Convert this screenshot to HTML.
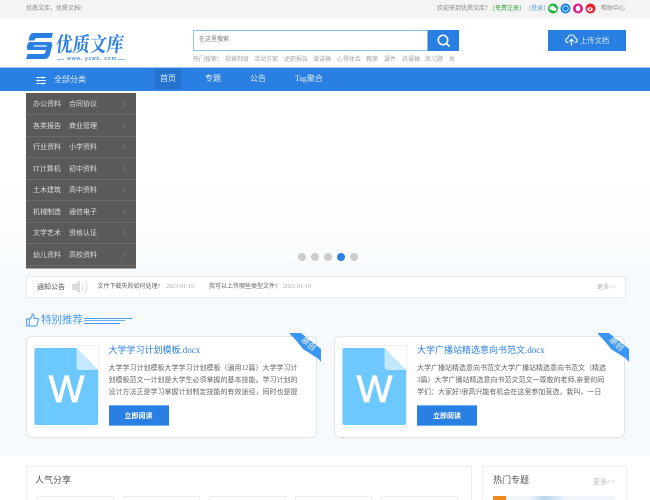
<!DOCTYPE html>
<html><head><meta charset="utf-8">
<style>
html,body{margin:0;padding:0;width:650px;height:500px;overflow:hidden;background:#fff}
body{position:relative;font-family:"Liberation Serif","Noto Sans CJK SC",sans-serif;color:#666}
.a{position:absolute;white-space:nowrap}
.x{font-size:6px;line-height:10px;color:#a5a5a5}
.m{position:absolute;left:26px;width:110px;height:21px;border-bottom:1px solid #6a6a6a;color:#ddd;font-size:7px;line-height:22px}
.m span{position:absolute;top:0}
.m i{position:absolute;top:0;left:96px;font-style:normal;font-size:9px;color:#888}
.card{position:absolute;top:336px;width:289px;height:100px;background:#fff;border:1px solid #e2e4e6;border-radius:6px}
.t{position:absolute;font-size:7px;line-height:12px;color:#666;white-space:nowrap}
.btn{position:absolute;width:60px;height:21px;background:#2a7fe2;color:#fff;font-size:7px;line-height:20px;text-align:center;font-weight:bold;box-sizing:border-box;border-top:1px solid #6fb0f0;border-bottom:1px solid #6fb0f0}
.h{position:absolute;top:496px;width:75px;height:10px;border:1px solid #eee;background:#fff}
.dot{position:absolute;top:253px;width:8px;height:8px;border-radius:50%;background:#ccc}
.n{font-size:8px;line-height:12px;color:#e4effb}
</style></head><body>
<div class="a" style="left:0;top:0;width:650px;height:18px;background:#f4f4f4"></div>
<div class="a x" style="left:26px;top:4px;color:#888">优质文库，优质文档!</div>
<div class="a x" style="left:437px;top:4px;color:#888">欢迎来到优质文库！</div>
<div class="a x" style="left:493px;top:4px;color:#3aa83a">[免费注册]</div>
<div class="a x" style="left:529px;top:4px;color:#5ba3d8">[登录]</div>
<svg class="a" style="left:548px;top:3px" width="50" height="12" viewBox="0 0 50 12">
<circle cx="5" cy="5.500" r="5" fill="#1fb53a"/><ellipse cx="4.200" cy="5" rx="2.800" ry="2.200" fill="#fff"/><ellipse cx="6.300" cy="6.300" rx="2.200" ry="1.700" fill="#fff"/>
<circle cx="17.500" cy="5.500" r="5" fill="#1280e6"/><circle cx="17.500" cy="5.500" r="2.800" fill="none" stroke="#bcdcf8" stroke-width="1"/>
<circle cx="30" cy="5.500" r="5" fill="#e0218a"/><ellipse cx="30" cy="5.500" rx="2.200" ry="2.900" fill="#fff"/>
<circle cx="42.500" cy="5.500" r="5" fill="#e8232e"/><ellipse cx="42" cy="6.300" rx="2.800" ry="2" fill="#fff"/><circle cx="42" cy="6.300" r="1" fill="#e8232e"/>
</svg>
<div class="a x" style="left:601px;top:4px;color:#888">帮助中心</div>

<svg class="a" style="left:26px;top:33px" width="27" height="26" viewBox="0 0 27 26">
<path d="M7 0H27L25.500 5H11Q9 5 8.300 7.500H2.500L3.500 3.500Q4.500 0 7 0Z" fill="#2a7fe2"/>
<path d="M4 9H24Q27 9 26 13L24 21Q23 26 18 26H0L1.500 21H17Q19 21 19.500 19L20 17H3Q0 17 1 13Q1.800 9 4 9Z" fill="#2a7fe2"/>
<path d="M8 12H21L20.500 14H7.500Z" fill="#a8cdf2"/>
</svg>
<div class="a" style="left:56px;top:32px;font-size:17px;line-height:22px;font-weight:bold;color:#2a7fe2;font-family:'Noto Serif CJK SC',serif;transform:skewX(-6deg) scaleY(1.2);transform-origin:center">优质文库</div>
<div class="a" style="left:57px;top:58.500px;width:7px;height:1px;background:#8fbcec"></div>
<div class="a" style="left:118px;top:58.500px;width:7px;height:1px;background:#8fbcec"></div>
<div class="a" style="left:67px;top:55.500px;font-family:'Liberation Sans',sans-serif;font-size:5px;line-height:7px;color:#4a90dc;letter-spacing:.75px;font-weight:bold">www. yzwk. com</div>

<div class="a" style="left:193px;top:30px;width:233px;height:19px;border:1px solid #8cc0f0;background:#fff"></div>
<div class="a x" style="left:199px;top:35px;color:#777">在这里搜索</div>
<div class="a" style="left:428px;top:30px;width:31px;height:21px;background:#2a7fe2"></div>
<svg class="a" style="left:436px;top:33px" width="16" height="16" viewBox="0 0 16 16"><circle cx="7" cy="7" r="4.700" fill="none" stroke="#fff" stroke-width="1.500"/><path d="M10.500 10.500L13.500 13.500" stroke="#fff" stroke-width="1.600"/></svg>
<div class="a x" style="left:193px;top:55px">热门搜索：</div>
<div class="a x" style="left:225px;top:55px">规章制度</div>
<div class="a x" style="left:254px;top:55px">活动方案</div>
<div class="a x" style="left:284px;top:55px">述职报告</div>
<div class="a x" style="left:313px;top:55px">演讲稿</div>
<div class="a x" style="left:337px;top:55px">心得体会</div>
<div class="a x" style="left:366px;top:55px">教案</div>
<div class="a x" style="left:384px;top:55px">课件</div>
<div class="a x" style="left:402px;top:55px">说课稿</div>
<div class="a x" style="left:425px;top:55px">练习题</div>
<div class="a x" style="left:449px;top:55px">发</div>

<div class="a" style="left:548px;top:30px;width:78px;height:21px;background:#2a7fe2"></div>
<svg class="a" style="left:565px;top:34px" width="13" height="12" viewBox="0 0 13 12"><path d="M3.500 8.500H3Q.8 8.500 .8 6.300Q.8 4.300 2.800 4Q3.300 1 6.500 1Q9.500 1 10.100 4Q12.200 4.300 12.200 6.300Q12.200 8.500 10 8.500H9.500" fill="none" stroke="#fff" stroke-width="1.100"/><path d="M6.500 11.500V5.500M4.300 7.500L6.500 5.300L8.700 7.500" fill="none" stroke="#fff" stroke-width="1.200"/></svg>
<div class="a" style="left:580px;top:35px;font-size:7.300px;line-height:11px;color:#d8e9fa">上传文档</div>

<div class="a" style="left:0;top:67px;width:650px;height:1px;background:#9cc6f2"></div>
<div class="a" style="left:0;top:68px;width:650px;height:23px;background:#2a7fe2"></div>
<div class="a" style="left:155px;top:69px;width:26px;height:20px;background:#2473cf"></div>
<svg class="a" style="left:36px;top:76px" width="10" height="9" viewBox="0 0 10 9"><path d="M0 1.500H10M0 4.500H10M0 7.500H10" stroke="#e6f0fb" stroke-width="1"/><circle cx="6.500" cy="1.500" r="1" fill="#fff"/><circle cx="2.500" cy="4.500" r="1" fill="#fff"/><circle cx="7" cy="7.500" r="1" fill="#fff"/></svg>
<div class="a n" style="left:54px;top:74px">全部分类</div>
<div class="a n" style="left:160px;top:73px">首页</div>
<div class="a n" style="left:205px;top:73px">专题</div>
<div class="a n" style="left:250px;top:73px">公告</div>
<div class="a n" style="left:295px;top:73px">Tag聚合</div>

<div class="a" style="left:0;top:91px;width:650px;height:175px;background:linear-gradient(#fff 50%,#f8fbfd)"></div>
<div class="a" style="left:0;top:266px;width:650px;height:190px;background:#f7fafc"></div>

<div class="a" style="left:26px;top:93px;width:110px;height:176px;background:#5a5a5a;border-bottom:1px solid #aaa;box-sizing:border-box"></div>
<div class="m" style="top:93px"><span style="left:7px">办公资料</span><span style="left:43px">合同协议</span><i>&gt;</i></div>
<div class="m" style="top:115px"><span style="left:7px">各类报告</span><span style="left:43px">商业管理</span><i>&gt;</i></div>
<div class="m" style="top:136px"><span style="left:7px">行业资料</span><span style="left:43px">小学资料</span><i>&gt;</i></div>
<div class="m" style="top:158px"><span style="left:7px">IT计算机</span><span style="left:43px">初中资料</span><i>&gt;</i></div>
<div class="m" style="top:179px"><span style="left:7px">土木建筑</span><span style="left:43px">高中资料</span><i>&gt;</i></div>
<div class="m" style="top:201px"><span style="left:7px">机械制造</span><span style="left:43px">通信电子</span><i>&gt;</i></div>
<div class="m" style="top:222px"><span style="left:7px">文学艺术</span><span style="left:43px">资格认证</span><i>&gt;</i></div>
<div class="m" style="top:244px"><span style="left:7px">幼儿资料</span><span style="left:43px">高校资料</span><i>&gt;</i></div>

<div class="dot" style="left:298px"></div>
<div class="dot" style="left:311px"></div>
<div class="dot" style="left:324px"></div>
<div class="dot" style="left:337px;background:#2a7fe2"></div>
<div class="dot" style="left:350px"></div>

<div class="a" style="left:26px;top:276px;width:598px;height:20px;background:#fff;border:1px solid #e9ecef"></div>
<div class="a" style="left:37px;top:282px;font-size:7px;line-height:10px;color:#555">通知公告</div>
<svg class="a" style="left:71px;top:277px" width="20" height="20" viewBox="0 0 20 20"><path d="M1 7H4L9 3.500V16.500L4 13H1Z" fill="#dcdcdc"/><path d="M11 6Q13 10 11 14M14 3.500Q18 10 14 16.500" fill="none" stroke="#ddd" stroke-width="1"/></svg>
<div class="a x" style="left:97.500px;top:282px;color:#666">文件下载失败如何处理?</div>
<div class="a x" style="left:166px;top:282px;color:#aaa">2023-01-19</div>
<div class="a x" style="left:209px;top:282px;color:#666">我可以上传哪些类型文件?</div>
<div class="a x" style="left:283px;top:282px;color:#aaa">2023-01-19</div>
<div class="a x" style="left:597px;top:283px;color:#aaa">更多&gt;&gt;</div>

<svg class="a" style="left:26px;top:313px" width="13" height="14" viewBox="0 0 13 14"><path d="M.6 6H3.200V13H.6ZM3.200 6.500L6 3.500V1Q8 .5 8 3V5.500H11.500Q12.800 5.500 12.400 7L11 12Q10.700 13 9.500 13H3.200" fill="none" stroke="#4a9bf0" stroke-width="1"/></svg>
<div class="a" style="left:41px;top:314px;font-size:10.500px;line-height:14px;color:#4a9bf0">特别推荐</div>
<div class="a" style="left:84px;top:318px;width:48px;height:1px;background:#4a9bf0"></div>
<div class="a" style="left:84px;top:320px;width:41px;height:1px;background:#6aaef2"></div>
<div class="a" style="left:84px;top:323px;width:36px;height:1px;background:#4a9bf0"></div>

<div class="card" style="left:26px"></div>
<div class="card" style="left:334px"></div>
<svg class="a" style="left:34px;top:345px" width="65" height="84" viewBox="0 0 65 84"><rect x=".5" y=".5" width="64" height="82" fill="#fff" stroke="#eee"/><path d="M3 3H42.500L64 25V78Q64 80 62 80H3Q.5 80 .5 78V5Q.5 3 3 3Z" fill="#6cc8fe"/><path d="M42.500 3L64 25H46Q42.500 25 42.500 21Z" fill="#c4e8fd"/><text x="32.500" y="57" font-family="Liberation Sans" font-size="38" fill="#fff" stroke="#fff" stroke-width=".8" text-anchor="middle">W</text></svg>
<svg class="a" style="left:342px;top:345px" width="65" height="84" viewBox="0 0 65 84"><rect x=".5" y=".5" width="64" height="82" fill="#fff" stroke="#eee"/><path d="M3 3H42.500L64 25V78Q64 80 62 80H3Q.5 80 .5 78V5Q.5 3 3 3Z" fill="#6cc8fe"/><path d="M42.500 3L64 25H46Q42.500 25 42.500 21Z" fill="#c4e8fd"/><text x="32.500" y="57" font-family="Liberation Sans" font-size="38" fill="#fff" stroke="#fff" stroke-width=".8" text-anchor="middle">W</text></svg>

<div class="a" style="left:108.500px;top:344px;font-size:9px;line-height:13px;color:#2a7fe2">大学学习计划模板.docx</div>
<div class="t" style="left:108.500px;top:362px">大学学习计划模板大学学习计划模板（通用12篇）大学学习计</div>
<div class="t" style="left:108.500px;top:374px">划模板范文一计划是大学生必须掌握的基本技能。学习计划的</div>
<div class="t" style="left:108.500px;top:386px">设计方法正是学习掌握计划制定技能的有效途径，同时也是提</div>
<div class="btn" style="left:108.500px;top:405px">立即阅读</div>

<div class="a" style="left:417px;top:344px;font-size:9px;line-height:13px;color:#2a7fe2">大学广播站精选意向书范文.docx</div>
<div class="t" style="left:417px;top:362px">大学广播站精选意向书范文大学广播站精选意向书范文（精选</div>
<div class="t" style="left:417px;top:374px">3篇）大学广播站精选意向书范文范文一尊敬的老师,亲爱的同</div>
<div class="t" style="left:417px;top:386px">学们：大家好!很高兴能有机会在这里参加竞选，我叫，一日</div>
<div class="btn" style="left:417px;top:405px">立即阅读</div>

<svg class="a" style="left:290px;top:333px" width="31" height="29" viewBox="0 0 31 29"><path d="M0 0H11L31 16V29L28 25.500L13 16Q7 8 0 1Z" fill="#3a96f5"/><text transform="translate(18.500 11) rotate(42)" font-size="8" fill="#fff" text-anchor="middle" dominant-baseline="central" font-family="Noto Sans CJK SC">原创</text></svg>
<svg class="a" style="left:598px;top:333px" width="31" height="29" viewBox="0 0 31 29"><path d="M0 0H11L31 16V29L28 25.500L13 16Q7 8 0 1Z" fill="#3a96f5"/><text transform="translate(18.500 11) rotate(42)" font-size="8" fill="#fff" text-anchor="middle" dominant-baseline="central" font-family="Noto Sans CJK SC">原创</text></svg>

<div class="a" style="left:26px;top:466px;width:444px;height:50px;border:1px solid #eee;background:#fff"></div>
<div class="a" style="left:35px;top:474px;font-size:9px;line-height:13px;color:#555">人气分享</div>
<div class="h" style="left:37px"></div>
<div class="h" style="left:123px"></div>
<div class="h" style="left:209px"></div>
<div class="h" style="left:295px"></div>
<div class="h" style="left:381px"></div>

<div class="a" style="left:482px;top:466px;width:143px;height:50px;border:1px solid #eee;background:#fff"></div>
<div class="a" style="left:493px;top:474px;font-size:9px;line-height:13px;color:#555">热门专题</div>
<div class="a" style="left:593px;top:477px;font-size:7px;line-height:10px;color:#bbb">更多&gt;&gt;</div>
<div class="a" style="left:493px;top:496px;width:122px;height:10px;background:linear-gradient(90deg,#f0f5fb 30%,#b9d4ec 42%,#f0f5fb 60%)"></div>
<div class="a" style="left:493px;top:496px;width:13px;height:10px;background:#f08a1c"></div>
</body></html>
